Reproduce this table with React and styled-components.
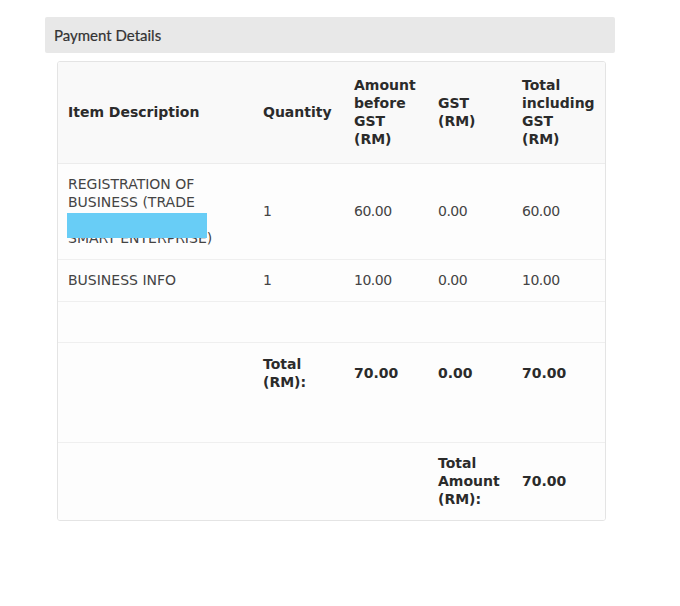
import React from "react";
import styled, { createGlobalStyle } from "styled-components";

const GlobalStyle = createGlobalStyle`
	body {
		margin: 0;
		background: #ffffff;
	}
`;

const items = [
	{
		id: 1,
		lines: ["REGISTRATION OF", "BUSINESS (TRADE", "NAME) - XXXXXXX", "SMART ENTERPRISE)"],
		redact: true,
		qty: "1",
		amount: "60.00",
		gst: "0.00",
		total: "60.00",
	},
	{
		id: 2,
		lines: ["BUSINESS INFO"],
		qty: "1",
		amount: "10.00",
		gst: "0.00",
		total: "10.00",
	},
];

export default function App() {
	return (
		<Page>
			<GlobalStyle />
			<Panel>
				<PanelHeading>Payment Details</PanelHeading>
				<TableBox>
					<Table>
						<colgroup>
							<col style={{ width: 195 }} />
							<col style={{ width: 91 }} />
							<col style={{ width: 84 }} />
							<col style={{ width: 84 }} />
							<col />
						</colgroup>
						<thead>
							<HeadRow>
								<Th>Item Description</Th>
								<Th>Quantity</Th>
								<Th>
									Amount
									<br />
									before
									<br />
									GST
									<br />
									(RM)
								</Th>
								<Th>
									GST
									<br />
									(RM)
								</Th>
								<Th>
									Total
									<br />
									including
									<br />
									GST
									<br />
									(RM)
								</Th>
							</HeadRow>
						</thead>
						<tbody>
							{items.map((item) => (
								<Row key={item.id} height={item.redact ? 96 : 42}>
									<Td>
										<Description>
											{item.lines.map((line, i) => (
												<React.Fragment key={i}>
													{i > 0 && <br />}
													{line}
												</React.Fragment>
											))}
											{item.redact && <Redaction />}
										</Description>
									</Td>
									<NumberCell>{item.qty}</NumberCell>
									<NumberCell>{item.amount}</NumberCell>
									<NumberCell>{item.gst}</NumberCell>
									<NumberCell>{item.total}</NumberCell>
								</Row>
							))}
							<Row height={41}>
								<Td colSpan={5} />
							</Row>
							<Row height={100}>
								<Td />
								<TotalCell top>
									Total
									<br />
									(RM):
								</TotalCell>
								<TotalCell top>
									<Figure>70.00</Figure>
								</TotalCell>
								<TotalCell top>
									<Figure>0.00</Figure>
								</TotalCell>
								<TotalCell top>
									<Figure>70.00</Figure>
								</TotalCell>
							</Row>
							<Row height={78} last>
								<Td />
								<Td />
								<Td />
								<TotalCell>
									Total
									<br />
									Amount
									<br />
									(RM):
								</TotalCell>
								<TotalCell>70.00</TotalCell>
							</Row>
						</tbody>
					</Table>
				</TableBox>
			</Panel>
		</Page>
	);
}

const Page = styled.div`
	padding: 17px 0 0 45px;
`;

const Panel = styled.div`
	width: 570px;
`;

const PanelHeading = styled.div`
	height: 36px;
	display: flex;
	align-items: center;
	padding-left: 9px;
	background: #e8e8e8;
	border-radius: 2px;
	font-family: Lato, "Open Sans", sans-serif;
	font-size: 15px;
	color: #333333;
	-webkit-text-stroke: 0.2px #333333;
`;

const TableBox = styled.div`
	margin: 8px 9px 0 12px;
	border: 1px solid #e4e4e4;
	border-radius: 3px;
	overflow: hidden;
	background: #ffffff;
`;

const Table = styled.table`
	width: 100%;
	border-collapse: collapse;
	table-layout: fixed;
	font-family: "DejaVu Sans", Verdana, sans-serif;
	font-size: 14px;
	line-height: 18px;
	color: #444444;
`;

const HeadRow = styled.tr`
	height: 101px;
	background: #f9f9f9;
	border-bottom: 1px solid #ececec;
`;

const Th = styled.th`
	text-align: left;
	vertical-align: middle;
	padding: 0 10px;
	font-weight: bold;
	color: #2b2b2b;
`;

const Row = styled.tr`
	height: ${(p) => p.height}px;
	border-bottom: ${(p) => (p.last ? "none" : "1px solid #efefef")};
	background: #fdfdfd;
`;

const Td = styled.td`
	padding: 0 10px;
	vertical-align: middle;
`;

const NumberCell = styled(Td)`
	letter-spacing: -0.5px;
`;

const TotalCell = styled(Td)`
	vertical-align: ${(p) => (p.top ? "top" : "middle")};
	padding-top: ${(p) => (p.top ? "12px" : "0")};
	font-weight: bold;
	color: #2b2b2b;
`;

const Figure = styled.span`
	display: block;
	padding-top: 9px;
`;

const Description = styled.div`
	position: relative;
`;

const Redaction = styled.span`
	position: absolute;
	left: -1px;
	top: 38px;
	width: 140px;
	height: 25px;
	background: #68cdf6;
`;
